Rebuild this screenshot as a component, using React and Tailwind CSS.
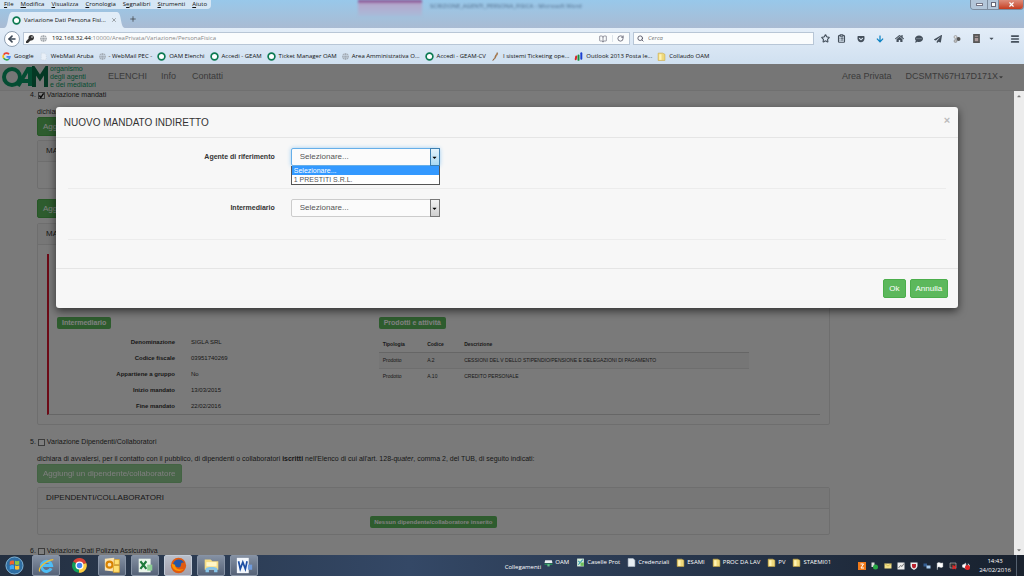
import { useState } from "react";
import {
  ArrowLeft,
  BookOpen,
  ClipboardList,
  Flag,
  Menu,
  Plus,
  Search,
  RotateCw,
  Star,
  Volume2,
  X,
} from "lucide-react";
import {
  FaArrowDown,
  FaCaretDown,
  FaCaretUp,
  FaCommentDots,
  FaGetPocket,
  FaGlobe,
  FaHome,
  FaKey,
  FaPaperPlane,
} from "react-icons/fa";

const MENUS = [
  ["", "F", "ile"],
  ["", "M", "odifica"],
  ["", "V", "isualizza"],
  ["", "C", "ronologia"],
  ["S", "e", "gnalibri"],
  ["", "S", "trumenti"],
  ["", "A", "iuto"],
];

const BOOKMARKS = [
  { icon: "google", label: "Google" },
  { icon: "page", label: "WebMail Aruba" },
  { icon: "globe", label: "- WebMail PEC -" },
  { icon: "ring", label: "OAM Elenchi" },
  { icon: "ring", label: "Accedi - GEAM" },
  { icon: "ring", label: "Ticket Manager OAM" },
  { icon: "globe", label: "Area Amministrativa O..." },
  { icon: "ring", label: "Accedi - GEAM-CV" },
  { icon: "feather", label: "I sistemi Ticketing ope..." },
  { icon: "bars", label: "Outlook 2013 Posta le..." },
  { icon: "folder", label: "Collaudo OAM" },
];

const MANDATE = [
  ["Denominazione", "SIGLA SRL"],
  ["Codice fiscale", "03951740269"],
  ["Appartiene a gruppo", "No"],
  ["Inizio mandato", "13/03/2015"],
  ["Fine mandato", "22/02/2016"],
];

const PRODUCTS = [
  ["Prodotto", "A.2", "CESSIONI DEL V DELLO STIPENDIO/PENSIONE E DELEGAZIONI DI PAGAMENTO"],
  ["Prodotto", "A.10", "CREDITO PERSONALE"],
];

const LINKS = [
  { icon: "drive", label: "OAM" },
  { icon: "sheet", label: "Caselle Prot" },
  { icon: "doc", label: "Credenziali" },
  { icon: "folder", label: "ESAMI" },
  { icon: "folder", label: "PROC DA LAV" },
  { icon: "folder", label: "PV" },
  { icon: "folder", label: "STAEMI01" },
];

function SmallIcon({ kind }) {
  if (kind === "globe") return <FaGlobe size={7} className="shrink-0 text-[#a3abb4]" />;
  return (
    <svg viewBox="0 0 16 16" className="h-[9px] w-[9px] shrink-0">
      {kind === "ring" && (
        <circle cx="8" cy="8" r="6" fill="#fff" stroke="#0d7a52" strokeWidth="3" />
      )}
      {kind === "google" && (
        <g fill="none" strokeWidth="3">
          <path d="M12.5 4A6 6 0 0 0 3 5" stroke="#ea4335" />
          <path d="M3 5a6 6 0 0 0 0 6" stroke="#fbbc05" />
          <path d="M3 11a6 6 0 0 0 9 1.5" stroke="#34a853" />
          <path d="M8 8.5h6a6 6 0 0 1-2 4" stroke="#4285f4" />
        </g>
      )}
      {kind === "page" && <path d="M4 2h6l3 3v9H4z" fill="#e9f0f8" stroke="#c3ccd6" strokeDasharray="2 2" />}
      {kind === "feather" && (
        <path d="M11 1c2 3-1 5-2 7s-2 5-6 7c1-3 4-3 4-6s3-4 4-8z" fill="#d98a3c" stroke="#7a5230" />
      )}
      {kind === "bars" && (
        <g strokeWidth="3.5" strokeLinecap="round">
          <path d="M4 8l-1 5" stroke="#d8262c" />
          <path d="M8 6v8" stroke="#1a8f3c" />
          <path d="M13 2v10" stroke="#1b3fd0" />
        </g>
      )}
      {kind === "folder" && (
        <g>
          <path d="M2 2h8l4 2v11H2z" fill="#efd97c" stroke="#c9a63f" />
          <path d="M4 4h4v10H4z" fill="#fff3b5" />
        </g>
      )}
      {kind === "drive" && (
        <g>
          <path d="M2 4h12l1 5H1z" fill="#e8edf0" />
          <path d="M1 10h14v2H1z" fill="#27a35a" />
          <path d="M6 11h4v4H6z" fill="#63c48a" />
        </g>
      )}
      {kind === "sheet" && (
        <g>
          <path d="M2 1h12v14H2z" fill="#d9efdc" />
          <path d="M4 12l8-9M4 5l4 4" stroke="#3f9fb0" strokeWidth="2" />
          <path d="M8 8h6v6H8z" fill="#6cbf5a" />
        </g>
      )}
      {kind === "doc" && <path d="M2 1h9l3 3v11H2z" fill="#e6edf3" stroke="#b7c3cf" />}
    </svg>
  );
}

function BrowserChrome() {
  return (
    <header className="shrink-0 font-['Open_Sans','Noto_Sans',sans-serif] text-[6px] leading-[9px] text-[#111]">
      <div className="relative bg-linear-to-b from-[#98c8ea] to-[#a9bbd3]">
        <div className="absolute inset-0 overflow-hidden" aria-hidden="true">
          <div className="absolute top-0 left-[35%] h-4 w-16 bg-linear-to-b from-[#7a3580] via-[#b3a8cd] via-25% to-[#a9bbd8] blur-[1px]" />
          <p className="absolute top-[2px] left-[42%] text-[6px] text-[#4d6c8b] blur-[1px]">
            SCRIZIONE_AGENTI_PERSONA_FISICA - Microsoft Word
          </p>
        </div>
        <div className="relative flex h-[10px] items-start justify-between">
          <nav className="flex gap-[7px] rounded-br bg-[#e4eef8]/80 px-1">
            {MENUS.map(([before, key, after]) => (
              <a key={key + after} href="#menu">
                {before}
                <u>{key}</u>
                {after}
              </a>
            ))}
          </nav>
          <div className="flex overflow-hidden rounded-b-sm border border-t-0 border-[#7d8da0] text-white">
            <button aria-label="Riduci" className="flex h-[9px] w-4 items-center justify-center bg-[#b3c6da]">
              <span className="h-[3px] w-[7px] border border-[#778] bg-white" />
            </button>
            <button aria-label="Ripristina" className="flex h-[9px] w-3 items-center justify-center border-x border-[#7d8da0] bg-[#b3c6da]">
              <span className="h-[5px] w-[5px] border border-[#667] bg-white" />
            </button>
            <button aria-label="Chiudi" className="flex h-[9px] w-6 items-center justify-center bg-linear-to-b from-[#dd8d7b] to-[#c43a1d]">
              <X size={7} strokeWidth={4} />
            </button>
          </div>
        </div>
        <div className="relative flex h-[18px] items-end gap-1 pl-[4px]">
          <div className="flex h-4 items-end">
            <svg viewBox="0 0 8 16" className="h-4 w-2">
              <path d="M0 16C5 16 3 0 8 0v16z" fill="#e1ecf7" />
            </svg>
            <div className="flex h-4 items-center gap-[3px] bg-[#e1ecf7]">
              <SmallIcon kind="ring" />
              <span>Variazione Dati Persona Fisi...</span>
              <button aria-label="Chiudi scheda" className="pl-[2px]">
                <X size={6} className="text-[#555]" />
              </button>
            </div>
            <svg viewBox="0 0 8 16" className="h-4 w-2">
              <path d="M8 16C3 16 5 0 0 0v16z" fill="#e1ecf7" />
            </svg>
          </div>
          <button aria-label="Nuova scheda" className="self-center">
            <Plus size={8} className="text-[#333]" />
          </button>
        </div>
      </div>

      <div className="bg-linear-to-b from-[#e3edf8] to-[#d0e0f0]">
        <div className="flex h-[21px] items-center gap-[3px] px-[4px]">
          <button aria-label="Indietro" className="flex h-4 w-4 shrink-0 items-center justify-center rounded-full border border-[#8fa0b3] bg-white">
            <ArrowLeft size={10} strokeWidth={4} className="text-[#3d4855]" />
          </button>
          <div className="flex h-[13px] flex-1 items-center border border-[#b8c6d6] bg-[#fafcfd]">
            {/* key shaft points down-left */}
            <FaKey size={8} className="mx-[2px] text-[#333]" />
            <FaGlobe size={7} className="mx-[4px] text-[#a3a8ad]" />
            <span className="pl-[1px] text-[#888]">
              <span className="text-[#111]">192.168.32.44</span>
              :10000/AreaPrivata/Variazione/PersonaFisica
            </span>
            <span className="flex-1" />
            <BookOpen size={8} className="mr-[5px] text-[#667]" />
            <button aria-label="Ricarica" className="border-l border-[#dde4ea] pr-[5px] pl-[4px]">
              <RotateCw size={7} strokeWidth={3} className="text-[#667]" />
            </button>
          </div>
          <label className="flex h-[13px] w-[181px] items-center gap-1 border border-[#b8c6d6] bg-[#fafcfd] px-[3px]">
            <Search size={7} strokeWidth={3} className="text-[#556]" />
            <input placeholder="Cerca" aria-label="Cerca" className="min-w-0 flex-1 placeholder:text-[#777] placeholder:italic outline-none" />
          </label>
          <div className="flex items-center gap-[11px] pl-[4px] text-[#45505c]">
            <Star size={9} strokeWidth={3} />
            <ClipboardList size={9} strokeWidth={3} className="-ml-1" />
            <FaGetPocket size={8} />
            <FaArrowDown size={8} className="text-[#0f84c4]" />
            <FaHome size={9} />
            <FaCommentDots size={8} />
            <FaPaperPlane size={8} />
            <svg viewBox="0 0 16 16" className="h-2 w-2">
              <circle cx="5" cy="4" r="3" fill="#ddd" stroke="#777" />
              <circle cx="11" cy="8" r="4" fill="#555" />
              <circle cx="5" cy="12" r="3" fill="#bbb" stroke="#777" />
            </svg>
            <svg viewBox="0 0 16 16" className="h-[9px] w-[9px]">
              <path d="M2 0h12v16H2z" fill="#555" />
              <path d="M5 3h6v2H5zM5 7h6v6H5z" fill="#a99" />
            </svg>
            <FaCaretDown size={7} className="-ml-1" />
            <Menu size={10} strokeWidth={4} className="ml-1" />
          </div>
        </div>
        <nav className="flex h-[15px] items-center gap-[5px] overflow-hidden pl-[2px] whitespace-nowrap">
          {BOOKMARKS.map((item) => (
            <a key={item.label} href="#bookmark" className="flex items-center gap-[3px]">
              <SmallIcon kind={item.icon} />
              {item.label}
            </a>
          ))}
        </nav>
      </div>
    </header>
  );
}

function SiteNav() {
  return (
    <nav className="flex h-[27px] shrink-0 items-center border-b border-[#e0e0e0] bg-[#ececec] pr-[20px] text-[9px] text-[#777]">
      <a href="#home" className="flex items-center gap-[1px] pl-[1px] text-[#0a9a66]">
        <svg viewBox="0 0 48 22" className="h-[22px] w-12" fill="none" stroke="currentColor" strokeWidth="4">
          <circle cx="11" cy="11" r="8" />
          <path d="M17 20L27 3h2v17M21 15h8" />
          <path d="M33 21V3l6 9 6-9v18" stroke="#087048" />
        </svg>
        <span className="text-[7px] leading-[8px]">
          organismo
          <br />
          degli agenti
          <br />
          e dei mediatori
        </span>
      </a>
      <a href="#elenchi" className="ml-3">ELENCHI</a>
      <a href="#info" className="ml-[14px]">Info</a>
      <a href="#contatti" className="ml-4">Contatti</a>
      <a href="#area" className="ml-auto">Area Privata</a>
      <a href="#user" className="ml-[14px] flex items-center">
        DCSMTN67H17D171X
        <FaCaretDown size={6} />
      </a>
    </nav>
  );
}

function GreenButton({ children, onClick, faded }) {
  return (
    <button
      onClick={onClick}
      disabled={faded}
      className="block h-[19px] rounded-xs border border-[#4cae4c] bg-[#5cb85c] px-[5px] text-[8px] text-white disabled:opacity-65"
    >
      {children}
    </button>
  );
}

function Badge({ children, small }) {
  return (
    <span
      className={`inline-block rounded-xs bg-[#5cb85c] leading-3 font-bold text-white ${
        small ? "px-1 text-[6px]" : "px-[5px] text-[7px]"
      }`}
    >
      {children}
    </span>
  );
}

function CheckLine({ number, label, checked = false }) {
  return (
    <label className="-ml-[7px] flex h-2 items-center gap-[2px] leading-2">
      <span>{number}.</span>
      <span className="relative h-[7px] w-[7px]">
        <input
          type="checkbox"
          defaultChecked={checked}
          className="peer block h-[7px] w-[7px] appearance-none border border-[#777] bg-white"
        />
        <svg viewBox="0 0 10 10" className="pointer-events-none absolute inset-0 hidden peer-checked:block">
          <path d="M2 5l2 3 4-6" fill="none" stroke="#111" strokeWidth="2" />
        </svg>
      </span>
      {label}
    </label>
  );
}

function Panel({ title, children }) {
  return (
    <section className="rounded-xs border border-[#ddd] bg-[#f5f5f5]">
      <h3 className="border-b border-[#ddd] bg-[#eee] px-2 text-[8px] leading-5 text-[#333]">{title}</h3>
      {children}
    </section>
  );
}

function FormPage() {
  return (
    <div className="min-w-0 flex-1 overflow-hidden bg-[#f5f5f5] pr-[18%] pl-[37px] text-[7px] leading-[9px] text-[#333]">
      <CheckLine number={4} label="Variazione mandati" checked />
      <p className="mt-2 mb-[1px]">dichiara:</p>
      <GreenButton>Aggiungi</GreenButton>
      <div className="mt-1 mb-[10px]">
        <Panel title="MANDATI">
          <div className="h-[26px]" />
        </Panel>
      </div>
      <GreenButton>Aggiungi</GreenButton>
      <div className="mt-[5px] mb-[13px]">
        <Panel title="MANDATI">
          <div className="px-[9px] py-[9px]">
            <div className="flex border-b border-l-2 border-b-[#ccc] border-l-[#d9152c] pt-[63px] pl-2">
              <div className="w-[41%]">
                <Badge>Intermediario</Badge>
                <dl className="mt-[5px] text-[6px] leading-4">
                  {MANDATE.map(([name, value]) => (
                    <div key={name} className="flex gap-4">
                      <dt className="w-[118px] text-right font-bold">{name}</dt>
                      <dd>{value}</dd>
                    </div>
                  ))}
                </dl>
              </div>
              <div className="flex-1 pl-[9px]">
                <Badge>Prodotti e attività</Badge>
                <table className="mt-2 w-[84%] text-left text-[5px] leading-[15px]">
                  <thead>
                    <tr className="border-b border-[#ccc]">
                      <th className="w-[12%] px-1">Tipologia</th>
                      <th className="w-[10%] px-1">Codice</th>
                      <th className="px-1">Descrizione</th>
                    </tr>
                  </thead>
                  <tbody>
                    {PRODUCTS.map((row) => (
                      <tr key={row[1]} className="odd:border-b odd:border-[#ddd] odd:bg-[#ededed]">
                        {row.map((cell) => (
                          <td key={cell} className="px-1 whitespace-nowrap">{cell}</td>
                        ))}
                      </tr>
                    ))}
                  </tbody>
                </table>
              </div>
            </div>
          </div>
        </Panel>
      </div>
      <CheckLine number={5} label="Variazione Dipendenti/Collaboratori" />
      <p className="mt-2 mb-[1px]">
        dichiara di avvalersi, per il contatto con il pubblico, di dipendenti o collaboratori <b>iscritti</b> nell'Elenco di
        cui all'art. 128-<i>quater</i>, comma 2, del TUB, di seguito indicati:
      </p>
      <GreenButton faded>Aggiungi un dipendente/collaboratore</GreenButton>
      <div className="mt-1 mb-3">
        <Panel title="DIPENDENTI/COLLABORATORI">
          <div className="flex h-[25px] items-center justify-center">
            <Badge small>Nessun dipendente/collaboratore inserito</Badge>
          </div>
        </Panel>
      </div>
      <CheckLine number={6} label="Variazione Dati Polizza Assicurativa" />
    </div>
  );
}

function Scrollbar() {
  return (
    <div className="z-20 flex w-[10px] shrink-0 flex-col items-center justify-between bg-[#ececec] py-[2px] text-[#777]" aria-hidden="true">
      <FaCaretUp size={6} />
      <FaCaretDown size={6} />
    </div>
  );
}

function SelectRow({ id, label, open, options }) {
  const [value, setValue] = useState(options[0]);

  return (
    <div className="mx-3 flex h-[51px] items-start border-b border-[#ececec] pt-[10px]">
      <label htmlFor={id} className="w-[223px] pr-4 text-right text-[7px] leading-[18px] font-bold text-[#333]">
        {label}
      </label>
      <div className="relative w-[149px] text-[8px] text-[#555]">
        <select
          id={id}
          value={value}
          onChange={(event) => setValue(event.target.value)}
          className={`block h-[18px] w-full appearance-none rounded-xs border bg-[#fbfbfb] pl-2 outline-none ${
            open ? "border-[#66afe9] shadow-[0_0_4px_#9dcdf2]" : "border-[#ccc]"
          }`}
        >
          {options.map((item) => (
            <option key={item}>{item}</option>
          ))}
        </select>
        <span
          className={`pointer-events-none absolute inset-y-0 right-0 flex w-[10px] items-center justify-center border ${
            open
              ? "border-[#3c7fb1] bg-linear-to-b from-[#e3f3fc] to-[#a9d9f2]"
              : "border-[#777] bg-linear-to-b from-[#f2f2f2] to-[#cfcfcf]"
          }`}
        >
          <FaCaretDown size={7} className="text-black" />
        </span>
        {open ? (
          <ul className="absolute top-full left-0 w-full border border-t-0 border-[#555] bg-white text-[7px] leading-[9px]">
            {options.map((item) => (
              <li key={item} className={item === value ? "bg-[#3399ff] px-[2px] text-white" : "px-[2px]"}>
                {item}
              </li>
            ))}
          </ul>
        ) : null}
      </div>
    </div>
  );
}

function MandateDialog({ onClose }) {
  return (
    <div className="absolute inset-0 z-10 bg-black/50 pt-[43px] pr-[10px]">
      <div
        role="dialog"
        aria-label="NUOVO MANDATO INDIRETTO"
        className="mx-auto w-[89%] rounded-[3px] bg-[#f7f7f7] shadow-[0_3px_9px_rgba(0,0,0,0.6)]"
      >
        <div className="flex h-[31px] items-center justify-between border-b border-[#e5e5e5] px-2">
          <h2 className="text-[10px] text-[#333]">NUOVO MANDATO INDIRETTO</h2>
          <button aria-label="Chiudi" onClick={onClose} className="pb-1 text-[11px] leading-3 font-bold text-[#bbb]">
            ×
          </button>
        </div>
        <SelectRow id="agente" label="Agente di riferimento" options={["Selezionare...", "1 PRESTITI S.R.L."]} open />
        <SelectRow id="intermediario" label="Intermediario" options={["Selezionare..."]} />
        <div className="mt-[28px] flex justify-end gap-1 border-t border-[#e5e5e5] px-[10px] py-[10px]">
          <GreenButton onClick={onClose}>Ok</GreenButton>
          <GreenButton onClick={onClose}>Annulla</GreenButton>
        </div>
      </div>
    </div>
  );
}

function AppIcon({ kind }) {
  return (
    <svg viewBox="0 0 20 20" className="h-[17px] w-[17px]">
      {kind === "ie" && (
        <g fill="none">
          <path d="M15.5 13.5a6 6 0 1 1 .5-3.500H6" stroke="#4dbdf5" strokeWidth="3.500" />
          <path d="M2 17C0 13 9 4 18 3" stroke="#f1c232" strokeWidth="1.500" />
        </g>
      )}
      {kind === "chrome" && (
        <g>
          <path d="M10 10L2.500 5.500A8.500 8.500 0 0 1 18 7z" fill="#db4437" />
          <path d="M10 10L18 7a8.500 8.500 0 0 1-9 11.500z" fill="#ffcd40" />
          <path d="M10 10L9 18.500A8.500 8.500 0 0 1 2.500 5.500z" fill="#0f9d58" />
          <circle cx="10" cy="10" r="4" fill="#4285f4" stroke="#fff" strokeWidth="1.500" />
        </g>
      )}
      {kind === "outlook" && (
        <g>
          <path d="M1 2l11-1v16L1 16z" fill="#fbe3b0" />
          <circle cx="6.500" cy="9" r="3.500" fill="none" stroke="#d98200" strokeWidth="2.500" />
          <path d="M12 3h6v6h-6zM11 10h7v8h-7z" fill="#ffdf70" stroke="#d9a02a" />
        </g>
      )}
      {kind === "excel" && (
        <g>
          <path d="M2 2h14v16H2z" fill="#e9f4ea" />
          <path d="M4 5l7 9M11 5l-7 9" stroke="#1f7a3c" strokeWidth="2.500" />
          <path d="M12 9h6v7h-6z" fill="#8dcf95" />
        </g>
      )}
      {kind === "firefox" && (
        <g>
          <circle cx="10" cy="10" r="9" fill="#e05a10" />
          <path d="M4 7c1-4 9-7 13 0-3-1-4 0-4 2s-2 4-4 3-6-1-5-5z" fill="#2456a6" />
          <path d="M2 8c0 8 9 11 14 6-5 2-10 0-10-5z" fill="#ff9500" />
        </g>
      )}
      {kind === "explorer" && (
        <g>
          <path d="M2 3h7l2 2h7v10H2z" fill="#f5dc84" />
          <path d="M4 6h12v5H4z" fill="#fff6c8" />
          <path d="M3 18v-4c0-3 14-3 14 0v4h-4v-3H7v3z" fill="#86c5ea" />
        </g>
      )}
      {kind === "word" && (
        <g>
          <path d="M1 1h14v18H1z" fill="#f3f7fc" />
          <path d="M3 5l2 9 3-8 3 8 2-9" fill="none" stroke="#1e4fa3" strokeWidth="2" />
          <path d="M14 9h5v6h-5z" fill="#6f9bdc" />
        </g>
      )}
    </svg>
  );
}

function Tray() {
  return (
    <div className="flex items-center gap-[5px] text-white">
      <svg viewBox="0 0 16 16" className="h-2 w-2">
        <path d="M0 0h16v16H0z" fill="#f07a1a" />
        <path d="M5 4h6L6 12h6" fill="none" stroke="#fff" strokeWidth="2" />
      </svg>
      <svg viewBox="0 0 16 16" className="h-2 w-2">
        <path d="M1 1h6v9H1z" fill="#ddd" />
        <circle cx="9" cy="10" r="5" fill="#27a844" />
      </svg>
      <svg viewBox="0 0 16 16" className="h-2 w-2">
        <path d="M1 3h14v10H1z" fill="#f3e08a" />
        <path d="M1 3l7 5 7-5" fill="none" stroke="#b59a35" />
      </svg>
      <svg viewBox="0 0 16 16" className="h-2 w-2">
        <path d="M1 1h14v14H1z" fill="#eee" />
        <path d="M3 12l4-5 3 2 4-6" fill="none" stroke="#777" strokeWidth="2" />
      </svg>
      <svg viewBox="0 0 16 16" className="h-2 w-2">
        <path d="M1 1h14v7c0 4-4 6-7 8-3-2-7-4-7-8z" fill="#eee" />
        <path d="M4 4h8v4c0 3-2 4-4 5-2-1-4-2-4-5z" fill="#b8222e" />
      </svg>
      <svg viewBox="0 0 16 16" className="h-2 w-2">
        <path d="M1 3h7v6H1z" fill="#345f94" />
        <path d="M7 7h8v6H7z" fill="#a9cdf0" />
      </svg>
      <Flag size={8} fill="white" />
      <svg viewBox="0 0 16 16" className="h-2 w-2">
        <path d="M2 2h12v10H2z" fill="#333" stroke="#ddd" />
        <path d="M7 7l7 7M14 7l-7 7" stroke="#e02424" strokeWidth="3" />
      </svg>
      <span className="relative">
        <Volume2 size={8} fill="white" />
        <span className="absolute right-0 bottom-0 h-[5px] w-[5px] rounded-full bg-[#e02424]" />
      </span>
    </div>
  );
}

function Taskbar() {
  return (
    <footer className="flex h-[21px] shrink-0 items-center bg-linear-to-r from-[#232f40] via-[#344866] via-40% to-[#18212e] font-['Open_Sans','Noto_Sans',sans-serif] text-[6px] leading-[9px] text-white">
      <button aria-label="Start" className="mr-[8px] ml-[5px] h-[19px] w-[19px]">
        <svg viewBox="0 0 20 20">
          <circle cx="10" cy="10" r="9" fill="#2f6ea3" stroke="#86b9dc" />
          <path d="M5 6q2-2 4.500-1v4Q7 8 5 9.500z" fill="#f0622d" />
          <path d="M10.500 5q2 1 4.500 0v4q-2.500 1-4.500 0z" fill="#8dc63f" />
          <path d="M5 10.500Q7 9 9.500 10v4Q7 13 5 14.500z" fill="#3fa9f5" />
          <path d="M10.500 10q2 1 4.500 0v4q-2.500 1-4.500 0z" fill="#fdc12d" />
        </svg>
      </button>
      <div className="flex h-full gap-[5px]">
        {["ie", "chrome", "outlook", "excel", "firefox", "explorer", "word"].map((kind) => (
          <button
            key={kind}
            aria-label={kind}
            className={`flex h-full w-7 items-center justify-center rounded-xs border ${
              kind === "chrome"
                ? "border-transparent"
                : kind === "firefox"
                  ? "border-[#c3ccd8] bg-linear-to-b from-[#b9bfca] to-[#a29fab]"
                  : "border-[#8793a5] bg-linear-to-b from-[#8490a2] to-[#566378]"
            }`}
          >
            <AppIcon kind={kind} />
          </button>
        ))}
      </div>
      <span className="mt-1 ml-auto">Collegamenti</span>
      <div className="mr-[27px] ml-[3px] flex gap-[7px] self-start pt-[3px]">
        {LINKS.map((item) => (
          <a key={item.label} href="#link" className="flex items-center gap-[2px]">
            <SmallIcon kind={item.icon} />
            {item.label}
          </a>
        ))}
      </div>
      <Tray />
      <div className="mr-[5px] ml-[9px] text-center">
        14:43
        <br />
        24/02/2016
      </div>
      <span className="h-full w-2 border-l border-[#55606e] bg-[#1a222e]" />
    </footer>
  );
}

export default function App() {
  const [dialogOpen, setDialogOpen] = useState(true);

  return (
    <div className="flex h-screen flex-col overflow-hidden">
      <BrowserChrome />
      <main className="relative flex min-h-0 flex-1 flex-col font-['Liberation_Sans',Arial,sans-serif]">
        <SiteNav />
        <div className="flex min-h-0 flex-1">
          <FormPage />
          <Scrollbar />
        </div>
        {dialogOpen ? <MandateDialog onClose={() => setDialogOpen(false)} /> : null}
      </main>
      <Taskbar />
    </div>
  );
}
